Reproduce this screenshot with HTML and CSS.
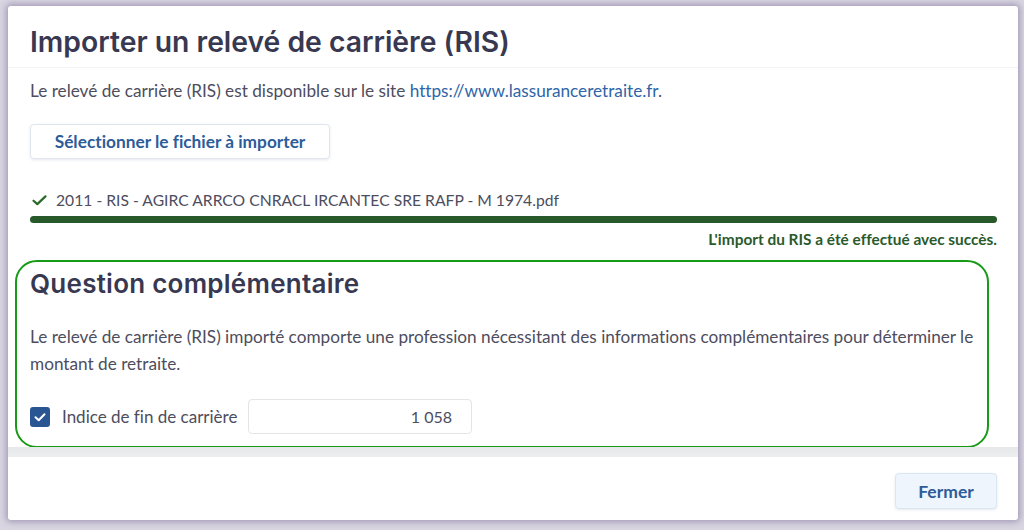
FILE: index.html
```html
<!DOCTYPE html>
<html lang="fr">
<head>
<meta charset="utf-8">
<title>Importer un relevé de carrière (RIS)</title>
<link rel="stylesheet" href="styles.css">
</head>
<body>
<div class="dialog">
  <div class="dialog-body">
    <div class="header">
      <h1 class="title">Importer un relevé de carrière (RIS)</h1>
    </div>
    <div class="content">
      <p class="intro">Le relevé de carrière (RIS) est disponible sur le site <a class="link" href="#">https://www.lassuranceretraite.fr</a>.</p>
      <button class="btn-select" type="button">Sélectionner le fichier à importer</button>
      <div class="file-row">
        <svg class="check-icon" viewBox="0 0 16 12" width="15" height="11"><path d="M1.5 6.2 L5.6 10 L14.5 1.5" fill="none" stroke="#2a6a2a" stroke-width="2.4" stroke-linecap="round" stroke-linejoin="round"/></svg>
        <span class="file-name">2011 - RIS - AGIRC ARRCO CNRACL IRCANTEC SRE RAFP - M 1974.pdf</span>
      </div>
      <div class="progress"></div>
      <div class="success">L'import du RIS a été effectué avec succès.</div>
      <div class="question">
        <h2 class="q-title">Question complémentaire</h2>
        <p class="q-text">Le relevé de carrière (RIS) importé comporte une profession nécessitant des informations complémentaires pour déterminer le montant de retraite.</p>
        <div class="field-row">
          <span class="checkbox"><svg viewBox="0 0 20 20" width="20" height="20"><path d="M5.5 10.2 L8.7 13.2 L14.5 7.2" fill="none" stroke="#fff" stroke-width="2" stroke-linecap="round" stroke-linejoin="round"/></svg></span>
          <span class="field-label">Indice de fin de carrière</span>
          <div class="input">1 058</div>
        </div>
      </div>
    </div>
  </div>
  <div class="band"></div>
  <div class="footer">
    <button class="btn-close" type="button">Fermer</button>
  </div>
</div>
</body>
</html>
```
FILE: styles.css
```css
html, body {
  margin: 0;
  padding: 0;
}
body {
  background: #d9d5e1;
  padding: 6px 6px 10px 8px;
  font-family: "Lato", "Open Sans", sans-serif;
  font-variant-ligatures: none;
  color: #4d4d5e;
  box-sizing: border-box;
  height: 530px;
  overflow: hidden;
}
.dialog {
  width: 1010px;
  height: 514px;
  background: #fff;
  box-shadow: 0 0 6px 2px rgba(120, 105, 150, 0.55);
  border-radius: 3px;
  display: flex;
  flex-direction: column;
  overflow: hidden;
}
.dialog-body {
  height: 441px;
  overflow: hidden;
}
.header {
  height: 62px;
  border-bottom: 1px solid #f4f4f6;
  padding: 18px 0 0 22px;
  box-sizing: border-box;
}
.title {
  margin: 0;
  font-family: "Inter", "Open Sans", sans-serif;
  font-weight: 600;
  font-size: 28.3px;
  line-height: 36px;
  color: #383851;
}
.content {
  padding: 0 21px 0 22px;
}
.intro {
  margin: 11px 0 0;
  font-size: 17.2px;
  line-height: 24px;
}
.link {
  color: #2f65a8;
  text-decoration: none;
}
.btn-select {
  margin-top: 21px;
  display: block;
  height: 35px;
  width: 300px;
  background: #fff;
  border: 1px solid #e1e6ee;
  border-radius: 4px;
  box-shadow: 0 1px 3px rgba(40, 70, 120, 0.12);
  font-family: "Lato", sans-serif;
  font-variant-ligatures: none;
  font-weight: 700;
  font-size: 17.3px;
  color: #2d5c99;
  padding: 0;
}
.file-row {
  margin-top: 29px;
  height: 24px;
  display: flex;
  align-items: center;
  padding-left: 2px;
}
.check-icon {
  margin-right: 9px;
}
.file-name {
  font-size: 15.7px;
  line-height: 24px;
}
.progress {
  margin-top: 4px;
  height: 7px;
  border-radius: 4px;
  background: #27592a;
}
.success {
  margin-top: 6px;
  text-align: right;
  font-weight: 700;
  font-size: 15.4px;
  line-height: 20px;
  color: #2a5a2c;
}
.question {
  margin: 11px 8px 0 -15px;
  border: 2px solid #179a16;
  border-radius: 22px;
  height: 188px;
  box-sizing: border-box;
  padding: 6px 6px 0 13px;
}
.q-title {
  margin: 0;
  font-family: "Inter", "Open Sans", sans-serif;
  font-weight: 600;
  font-size: 26px;
  letter-spacing: 0.25px;
  line-height: 32px;
  color: #383851;
}
.q-text {
  margin: 23px 0 0;
  font-size: 17.2px;
  line-height: 27px;
}
.field-row {
  margin-top: 22px;
  display: flex;
  align-items: center;
  height: 35px;
}
.checkbox {
  width: 20px;
  height: 20px;
  border-radius: 3px;
  background: #2a5593;
  display: inline-flex;
  margin-right: 12px;
}
.field-label {
  font-size: 17px;
  width: 186px;
}
.input {
  width: 224px;
  height: 35px;
  box-sizing: border-box;
  border: 1px solid #e4e4e6;
  border-radius: 4px;
  text-align: right;
  padding-right: 19px;
  font-size: 16px;
  line-height: 33px;
}
.band {
  height: 10px;
  background: linear-gradient(#e6e8ea, #eceef0);
}
.footer {
  flex: 1;
  display: flex;
  justify-content: flex-end;
  align-items: flex-start;
  padding: 16px 21px 0 0;
}
.btn-close {
  width: 102px;
  height: 36px;
  background: #eef5fd;
  border: 1px solid #dbe6f3;
  border-radius: 4px;
  box-shadow: 0 1px 3px rgba(40, 70, 120, 0.12);
  font-family: "Lato", sans-serif;
  font-variant-ligatures: none;
  font-weight: 700;
  font-size: 17.5px;
  color: #2d5c99;
  padding: 0;
}
```
